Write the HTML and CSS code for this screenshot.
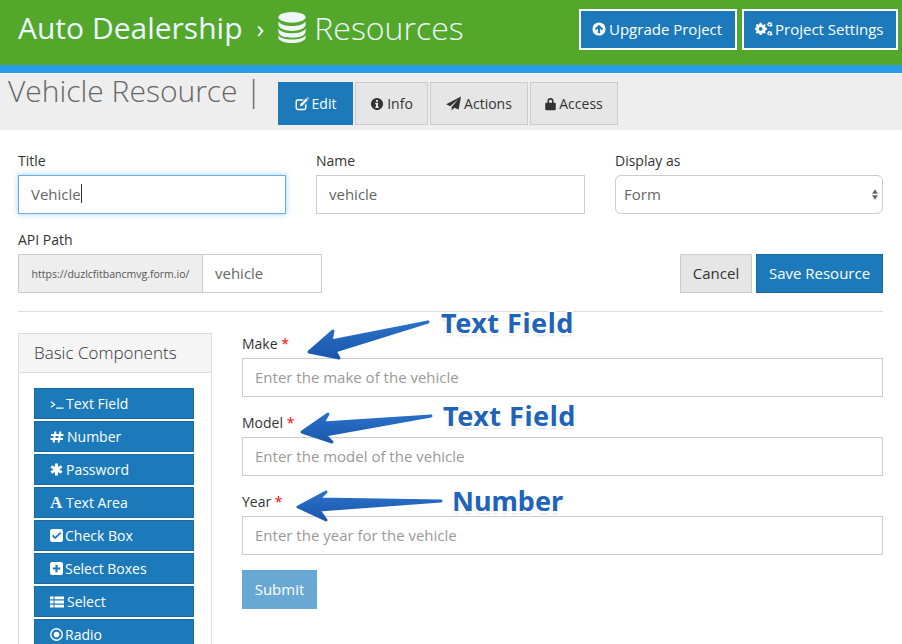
FILE: index.html
```html
<!DOCTYPE html>
<html lang="en">
<head>
<meta charset="utf-8">
<title>Vehicle Resource</title>
<link rel="stylesheet" href="styles.css">
</head>
<body>
<div class="page">
  <header class="topbar">
    <div class="crumbs">
      <span class="project">Auto Dealership</span>
      <span class="sep">›</span>
      <svg class="db" viewBox="0 0 28 32"><ellipse cx="14" cy="5.5" rx="14" ry="5.5"/><path d="M0 9.5C2 13 8 14.5 14 14.5S26 13 28 9.5V14C26 18 20 19.5 14 19.5S2 18 0 14Z"/><path d="M0 17C2 20.5 8 22 14 22S26 20.5 28 17V21.5C26 25.5 20 26.5 14 26.5S2 25.5 0 21.5Z"/><path d="M0 24C2 27 8 28.500 14 28.500S26 27 28 24V27C26 30.500 20 32 14 32S2 30.500 0 27Z"/></svg>
      <span class="section">Resources</span>
    </div>
    <div class="top-actions">
      <a class="top-btn top-upgrade"><svg class="ic" viewBox="0 0 16 16"><path fill-rule="evenodd" d="M8 .5a7.500 7.500 0 1 0 0 15A7.500 7.500 0 0 0 8 .5ZM8 3 12.800 7.800 11.200 9.400 9.300 7.500V12.800H6.700V7.500L4.800 9.400 3.200 7.800Z"/></svg>Upgrade Project</a>
      <a class="top-btn top-settings"><svg class="ic ic-wide" viewBox="0 0 18 16"><path fill-rule="evenodd" d="M6 3.500 7.500 3.900 8.500 3 9.800 4.300 9.100 5.400 9.500 6.500 11 6.900V8.800L9.500 9.200 9.100 10.300 9.800 11.400 8.500 12.700 7.500 12 6 12.400 5.500 14H3.700L3.300 12.400 2.200 11.900 1 12.700-.2 11.400.6 10.300.2 9.200-1 8.800V6.900L.2 6.500.6 5.400-.2 4.300 1 3 2.200 3.800 3.300 3.300 3.700 1.800H5.500ZM4.700 6A1.900 1.900 0 1 0 4.700 9.800 1.900 1.900 0 0 0 4.700 6Z" transform="translate(1 0)"/><path fill-rule="evenodd" d="M14.500 1 15.500 1.800 16.800 1.500V3.400L17.800 4.200 16.800 5.200 15.500 5.700 14.300 5 13 5.200 12.500 4 11.800 3 12.800 2.500 13.300 1.200ZM14.500 2.500A.9.9 0 1 0 14.500 4.300.9.9 0 0 0 14.500 2.500Z"/><path fill-rule="evenodd" d="M14.500 10 15.500 10.800 16.800 10.500V12.400L17.800 13.200 16.800 14.200 15.500 14.700 14.300 14 13 14.200 12.500 13 11.800 12 12.800 11.500 13.300 10.200ZM14.500 11.500A.9.9 0 1 0 14.500 13.300.9.9 0 0 0 14.500 11.500Z"/></svg>Project Settings</a>
    </div>
  </header>
  <div class="accent"></div>

  <div class="subbar">
    <h1 class="page-title">Vehicle Resource <span class="bar">|</span></h1>
    <nav class="tabs">
      <a class="tab active"><svg class="ic" viewBox="0 0 16 16"><path d="M3 2.500H10L8.300 4.200H3.200A.9.900 0 0 0 2.300 5.100V12.500A.9.900 0 0 0 3.200 13.400H10.500A.9.900 0 0 0 11.400 12.500V9.200L13.100 7.500V12.700A2.400 2.400 0 0 1 10.700 15H3A2.400 2.400 0 0 1 .6 12.700V4.900A2.400 2.400 0 0 1 3 2.500Z"/><path d="M12.700 1.500 14.700 3.500 8.300 9.900 5.700 10.500 6.300 7.900Z"/><path d="M13.500.7 14.300 0 16 1.700 15.300 2.700Z"/></svg>Edit</a>
      <a class="tab"><svg class="ic" viewBox="0 0 16 16"><path fill-rule="evenodd" d="M8 1a7 7 0 1 0 0 14A7 7 0 0 0 8 1ZM6.800 3.300H9.200V5.300H6.800ZM6 6.700H9.200V11H10V12.700H6V11H6.900V8.400H6Z"/></svg>Info</a>
      <a class="tab"><svg class="ic ic-plane" viewBox="0 0 16 16"><path d="M16 .500 13.500 14.500 8.700 12.400 6 15.500V11.800L13.500 3 4.500 10.800.200 8.900Z"/></svg>Actions</a>
      <a class="tab"><svg class="ic ic-sm" viewBox="0 0 12 16"><path fill-rule="evenodd" d="M2.500 6.500V4.700a3.500 3.500 0 0 1 7 0V6.500H11a1 1 0 0 1 1 1V14a1 1 0 0 1-1 1H1a1 1 0 0 1-1-1V7.500a1 1 0 0 1 1-1ZM4.300 6.500H7.700V4.700a1.700 1.700 0 0 0-3.400 0Z"/></svg>Access</a>
    </nav>
  </div>

  <main class="content">
    <div class="meta-row">
      <div class="field">
        <label class="label">Title</label>
        <div class="control focused"><span>Vehicle</span><span class="caret"></span></div>
      </div>
      <div class="field">
        <label class="label">Name</label>
        <input class="control" type="text" value="vehicle">
      </div>
      <div class="field">
        <label class="label">Display as</label>
        <div class="select-wrap">
          <select class="control rounded"><option>Form</option></select>
          <svg class="updown" viewBox="0 0 8 14"><path d="M4 0 8 6H0ZM4 14 0 8H8Z"/></svg>
        </div>
      </div>
    </div>

    <div class="api-row">
      <div class="api-field">
        <label class="label">API Path</label>
        <div class="input-group">
          <span class="addon">https://duzlcfitbancmvg.form.io/</span>
          <input class="control path" type="text" value="vehicle">
        </div>
      </div>
      <div class="api-actions">
        <a class="btn btn-default">Cancel</a>
        <a class="btn btn-primary">Save Resource</a>
      </div>
    </div>

    <hr class="rule">

    <div class="builder">
      <aside class="panel">
        <div class="panel-head">Basic Components</div>
        <div class="panel-body">
          <a class="comp"><svg class="ci ci-term" viewBox="0 0 15 12"><path class="ln" d="M1 3.500 5 6.500 1 9.500M6.500 10.500H14.500"/></svg>Text Field</a>
          <a class="comp"><svg class="ci" viewBox="0 0 14 12"><path class="ln thick" d="M5.500.5 3.500 11.500M10.500.5 8.500 11.500M1 4H13.500M.5 8H13"/></svg>Number</a>
          <a class="comp"><svg class="ci ci-n ci-gap" viewBox="0 0 12 12"><path class="ln heavy" d="M6 .5V11.500M1.200 3.200 10.800 8.800M10.800 3.200 1.200 8.800"/></svg>Password</a>
          <a class="comp"><span class="glyph">A</span>Text Area</a>
          <a class="comp"><svg class="ci ci-n" viewBox="0 0 12 12"><path fill-rule="evenodd" d="M2 0H10A2 2 0 0 1 12 2V10A2 2 0 0 1 10 12H2A2 2 0 0 1 0 10V2A2 2 0 0 1 2 0ZM9.300 2.800 4.800 7.200 2.800 5.300 1.700 6.400 4.800 9.500 10.400 3.900Z"/></svg>Check Box</a>
          <a class="comp"><svg class="ci ci-n" viewBox="0 0 12 12"><path fill-rule="evenodd" d="M2 0H10A2 2 0 0 1 12 2V10A2 2 0 0 1 10 12H2A2 2 0 0 1 0 10V2A2 2 0 0 1 2 0ZM5 2.500V5H2.500V7H5V9.500H7V7H9.500V5H7V2.500Z"/></svg>Select Boxes</a>
          <a class="comp"><svg class="ci" viewBox="0 0 14 12"><path d="M0 .5H3.500V3.300H0ZM4.500 .5H14V3.300H4.500ZM0 4.600H3.500V7.400H0ZM4.500 4.600H14V7.400H4.500ZM0 8.700H3.500V11.500H0ZM4.500 8.700H14V11.500H4.500Z"/></svg>Select</a>
          <a class="comp"><svg class="ci ci-n" viewBox="0 0 12 12"><path fill-rule="evenodd" d="M6 0a6 6 0 1 0 0 12A6 6 0 0 0 6 0ZM6 1.300a4.700 4.700 0 1 1 0 9.400 4.700 4.700 0 0 1 0-9.400ZM6 3.400a2.600 2.600 0 1 0 0 5.200 2.600 2.600 0 0 0 0-5.200Z"/></svg>Radio</a>
        </div>
      </aside>

      <form class="form-preview">
        <div class="form-group">
          <label class="label">Make <b class="req">*</b></label>
          <input class="control" type="text" placeholder="Enter the make of the vehicle">
        </div>
        <div class="form-group">
          <label class="label">Model <b class="req">*</b></label>
          <input class="control" type="text" placeholder="Enter the model of the vehicle">
        </div>
        <div class="form-group">
          <label class="label">Year <b class="req">*</b></label>
          <input class="control" type="text" placeholder="Enter the year for the vehicle">
        </div>
        <a class="btn btn-submit">Submit</a>
      </form>
    </div>
  </main>

  <svg class="arrows" viewBox="0 0 902 644">
    <defs>
      <linearGradient id="ag" x1="0" y1="0" x2="0" y2="1"><stop offset="0" stop-color="#2a70c8"/><stop offset="1" stop-color="#1a58ae"/></linearGradient>
    </defs>
    <path class="arrow" d="M309 352 333 331 331 341 428 322 335 351 339 358Z"/>
    <path class="arrow" d="M302 432 328 414 323 423 431 416 325 435 332 442Z"/>
    <path class="arrow" d="M298 507 326 492 319 499 441 501 319 510 326 520Z"/>
  </svg>
  <span class="note note-1">Text Field</span>
  <span class="note note-2">Text Field</span>
  <span class="note note-3">Number</span>
</div>
</body>
</html>
```
FILE: styles.css
```css
* { box-sizing: border-box; }
html, body { margin: 0; padding: 0; }
body { font-family: "Open Sans", sans-serif; color: #333; background: #fff; font-size: 14px; }
.page { position: relative; width: 902px; height: 644px; overflow: hidden; }

.topbar { height: 65px; background: #53a72a; display: flex; justify-content: space-between; padding: 9px 4px 0 18px; }
.crumbs { display: flex; align-items: center; height: 37px; color: #eef7ff; }
.project { font-size: 30px; }
.sep { font-size: 26px; margin: 0 14px; }
.db { width: 28px; height: 31px; fill: #eef7ff; margin-right: 8px; }
.section { font-size: 32px; font-weight: 300; }
.top-actions { display: flex; gap: 5px; }
.top-btn { height: 41px; border: 2px solid #fff; background: #1c7aba; color: #fff; font-size: 15px; display: flex; align-items: center; padding: 0 0 2px 11px; }
.top-upgrade { width: 158px; }
.top-settings { width: 156px; }
.ic { width: 14px; height: 14px; fill: currentColor; margin-right: 3px; }
.ic-wide { width: 18px; height: 16px; margin-right: 2px; }
.ic-sm { width: 11px; }
.ic-plane { width: 15px; height: 15px; }

.accent { height: 8px; background: #269be8; }
.subbar { height: 56px; margin-top: 1px; background: #eee; display: flex; padding-left: 8px; }
.page-title { margin: 0; font-size: 30px; font-weight: 300; color: #666; line-height: 33px; width: 270px; white-space: nowrap; }
.tabs { display: flex; gap: 2px; margin-top: 8px; height: 43px; }
.tab { border: 1px solid #ccc; background: #e6e6e6; color: #333; font-size: 14px; display: flex; align-items: center; justify-content: center; }
.tab:nth-child(1) { width: 75px; }
.tab:nth-child(2) { width: 73px; }
.tab:nth-child(3) { width: 98px; }
.tab:nth-child(4) { width: 88px; }
.tab.active { background: #1c7aba; border-color: #1c7aba; color: #fff; }

.content { padding: 21px 19px 0 18px; }
.meta-row { display: grid; grid-template-columns: 268px 269px 268px; column-gap: 30px; }
.label { display: block; font-size: 14px; line-height: 20px; color: #333; height: 24px; }
.control { display: flex; align-items: center; width: 100%; height: 39px; padding: 0 12px 2px; border: 1px solid #ccc; background: #fff; font: 15px "Open Sans", sans-serif; color: #666; border-radius: 0; outline: 0; }
.control::placeholder { color: #999; opacity: 1; }
.focused { border-color: #66afe9; box-shadow: 0 0 6px rgba(102,175,233,.6); }
.caret { width: 1px; height: 19px; background: #333; }
.select-wrap { position: relative; }
select.rounded { border-radius: 6px; appearance: none; -webkit-appearance: none; padding-left: 8px; }
.updown { position: absolute; right: 5px; top: 13px; width: 6px; height: 13px; fill: #666; pointer-events: none; }

.api-row { display: flex; justify-content: space-between; align-items: flex-end; margin-top: 16px; }
.input-group { display: flex; width: 304px; }
.addon { width: 184px; height: 39px; border: 1px solid #ccc; border-right: 0; background: #eee; color: #555; font-size: 10.5px; display: flex; align-items: center; justify-content: center; }
.path { width: 120px; }
.api-actions { display: flex; gap: 4px; }
.btn { height: 39px; display: flex; align-items: center; justify-content: center; font-size: 15px; border: 1px solid transparent; padding-bottom: 2px; }
.btn-default { width: 72px; background: #e6e6e6; border-color: #ccc; color: #333; }
.btn-primary { width: 127px; background: #1c7aba; border-color: #19699f; color: #fff; }
.rule { margin: 18px 0 21px; border: 0; border-top: 1px solid #ddd; }

.builder { display: flex; gap: 30px; align-items: flex-start; }
.panel { width: 194px; flex: none; border: 1px solid #ddd; height: 400px; }
.panel-head { height: 39px; background: #f5f5f5; border-bottom: 1px solid #ddd; padding-left: 15px; font-size: 17px; font-weight: 300; line-height: 38px; }
.panel-body { padding: 15px 17px 0 15px; display: flex; flex-direction: column; gap: 2px; }
.comp { height: 31px; background: #1c7aba; border: 1px solid #19699f; color: #fff; font-size: 14px; display: flex; align-items: center; padding-left: 15px; flex: none; }
.ci { width: 14px; height: 12px; fill: #fff; margin-right: 3px; flex: none; }
.ci-n { width: 13px; height: 13px; margin-right: 2px; }
.ci-term { margin-right: 2px; }
.ci-gap { margin-right: 3px; }
.ln { fill: none; stroke: #fff; stroke-width: 1.3; }
.thick { stroke-width: 2; }
.heavy { stroke-width: 2.8; }
.glyph { font: bold 17px "Liberation Serif", serif; margin-right: 4px; width: 12px; }

.form-preview { flex: 1; margin-top: 1px; }
.label .req { color: #f00; font-weight: 400; }
.form-group + .form-group { margin-top: 16px; }
.btn-submit { width: 75px; margin-top: 15px; background: #6aa8d4; border-color: #6aa8d4; color: #fff; }

.arrows { position: absolute; left: 0; top: 0; width: 902px; height: 644px; pointer-events: none; }
.arrow { fill: url(#ag); stroke: url(#ag); stroke-width: 3; stroke-linejoin: round; }
.note { position: absolute; font: bold 27px/34px "Noto Sans", "Open Sans", sans-serif; color: #2063b9; white-space: nowrap; text-shadow: -1.5px -1.5px 0 #fff, 1.5px -1.5px 0 #fff, -1.5px 1.5px 0 #fff, 1.5px 1.5px 0 #fff, 0 2px 3px rgba(0,0,0,.3); }
.note-1, .note-2 { letter-spacing: .5px; }
.note-1 { left: 441px; top: 306px; }
.note-2 { left: 443px; top: 399px; }
.note-3 { left: 452px; top: 484px; }
```
